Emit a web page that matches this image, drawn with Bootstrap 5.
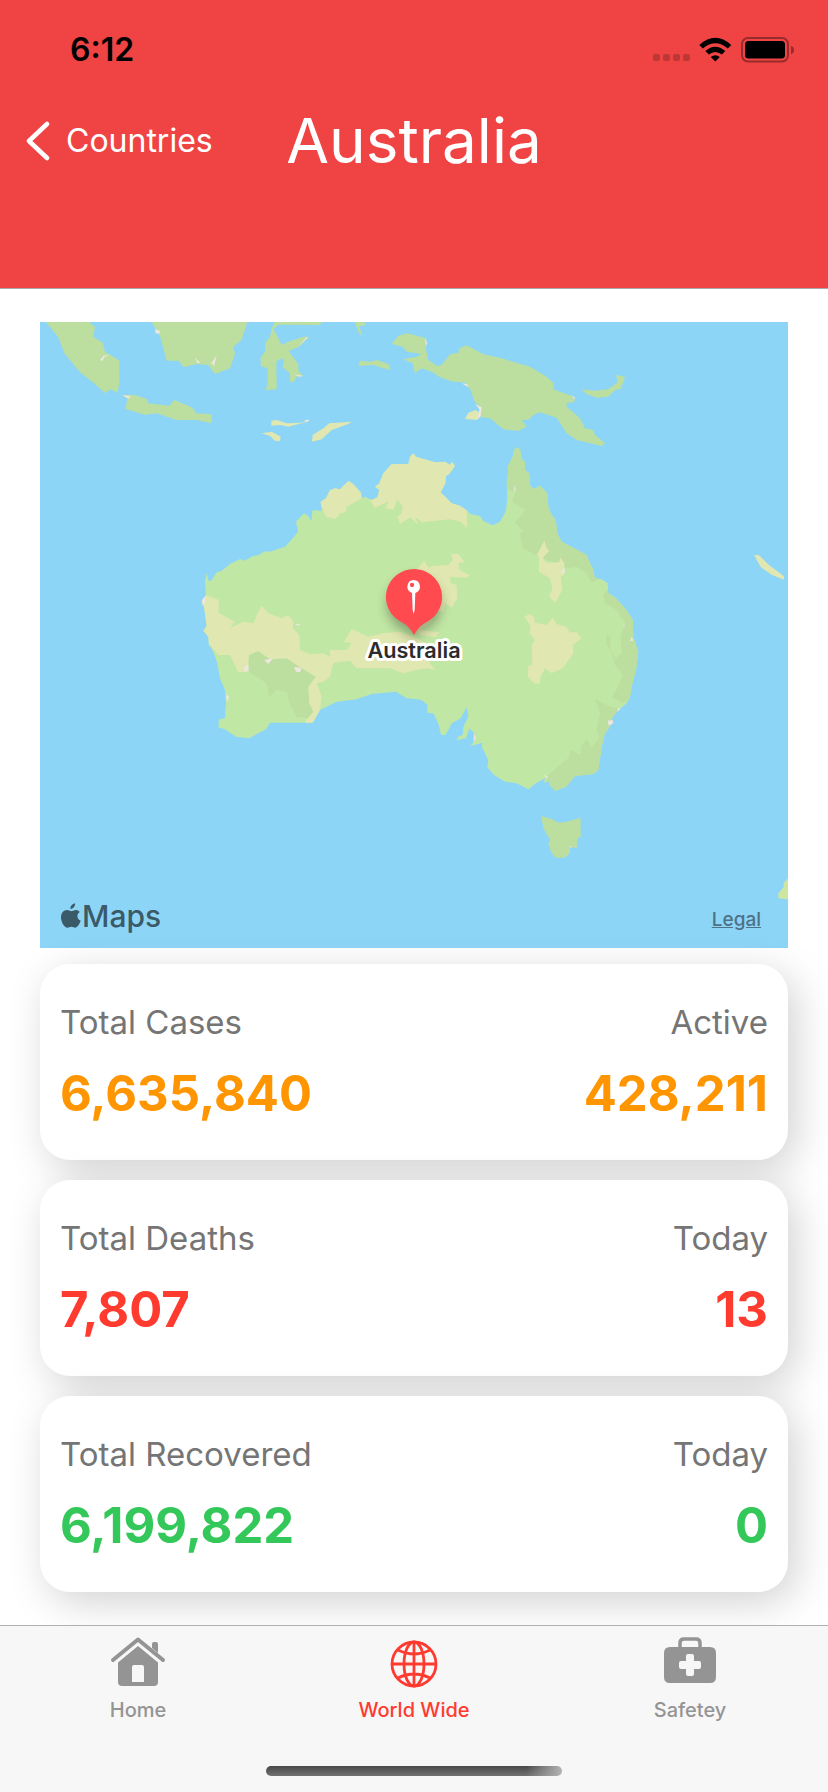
<!DOCTYPE html>
<html lang="en">
<head>
<meta charset="utf-8">
<meta name="viewport" content="width=device-width, initial-scale=1">
<title>Australia</title>
<link href="https://cdn.jsdelivr.net/npm/bootstrap@5.3.0/dist/css/bootstrap.min.css" rel="stylesheet">
<style>
  body { font-family: Inter, "Liberation Sans", sans-serif; background: #fff; }
  .app-header { background: #f04444; border-bottom: 1px solid #a8a8a8; height: 289px; }
  .status-bar { height: 96px; padding: 4px 34px 0 70px; }
  .clock { font-size: 32px; font-weight: 600; line-height: 40px; color: #000; }
  .title-row { display: grid; grid-template-columns: 1fr auto 1fr; height: 90px; padding: 0 24px; }
  .back-link { font-size: 32px; line-height: 40px; gap: 14px; }
  .page-title { font-size: 62px; line-height: 80px; font-weight: 400; }
  .content { padding: 33px 40px 32px; }
  .map-box { background: #8dd5f7; margin-bottom: 16px; }
  .map-foot { left: 21px; right: 27px; bottom: 14px; }
  .map-brand { font-size: 30px; line-height: 36px; font-weight: 500; color: #3b5a68; gap: 1px; }
  .legal-link { font-size: 19px; line-height: 28px; font-weight: 500; color: #4d7186; }
  .stat-list { gap: 20px; }
  .stat-card { background: #fff; border: 0; border-radius: 30px; box-shadow: 8px 10px 40px rgba(0,0,0,.18); padding: 36px 20px; }
  .stat-label { font-size: 33px; line-height: 44px; color: #757575; }
  .stat-value { font-size: 49px; line-height: 60px; font-weight: 700; margin-top: 20px; }
  .stat-card { padding-bottom: 36px; }
  .tone-orange { color: #ff9500; }
  .tone-red { color: #ff3b30; }
  .tone-green { color: #34c759; }
  .tab-bar { background: #f7f7f7; border-top: 1px solid #b0b0b0; height: 167px; padding-top: 10px; }
  .tab-link { font-size: 20px; line-height: 24px; font-weight: 500; color: #949494; gap: 10px; }
  .tab-link.active { color: #ff3b30; }
  .home-bar { width: 296px; height: 10px; border-radius: 5px; background: linear-gradient(90deg, transparent 88%, #b4b4b4), linear-gradient(#484848, #727272); margin-bottom: 16px; }
</style>
</head>
<body class="d-flex flex-column min-vh-100">
<header class="app-header">
  <div class="status-bar d-flex align-items-center justify-content-between">
    <span class="clock">6:12</span>
    <svg width="142" height="26" viewBox="0 0 142 26" aria-hidden="true">
      <g fill="#bd3737"><rect x="1" y="17" width="7" height="7" rx="2"/><rect x="11" y="17" width="7" height="7" rx="2"/><rect x="21" y="17" width="7" height="7" rx="2"/><rect x="31" y="17" width="7" height="7" rx="2"/></g>
      <path d="M47.300 8 Q63.300 -6.500 79.300 8 L75.800 11.500 Q63.300 1 50.800 11.500 Z M53.300 14 Q63.300 5.500 73.300 14 L69.800 17.500 Q63.300 12.500 56.800 17.500 Z M58.800 20 Q63.300 16.500 67.800 20 L63.300 24.500 Z"/>
      <rect x="90" y="1" width="46" height="23.500" rx="6" fill="none" stroke="#982b2b" stroke-width="2"/>
      <rect x="93" y="4" width="40" height="17.500" rx="3.500"/>
      <path d="M139 9 Q142 9.500 142 13 Q142 16.500 139 17 Z" fill="#982b2b"/>
    </svg>
  </div>
  <div class="title-row align-items-center">
    <a href="#" class="back-link d-inline-flex align-items-center text-white text-decoration-none">
      <svg width="28" height="40" viewBox="0 0 28 40" aria-hidden="true"><path d="M23 3 L5 20 L23 37" fill="none" stroke="#fff" stroke-width="4.500" stroke-linecap="round" stroke-linejoin="round"/></svg>
      <span>Countries</span>
    </a>
    <h1 class="page-title text-white mb-0">Australia</h1>
  </div>
</header>

<main class="content flex-grow-1">
  <section class="map-box position-relative" aria-label="Map">
    <svg class="d-block w-100" viewBox="0 6 2244 1878">
      <defs>
        <path id="mainland" d="M500 760 L506 783 514 782 530 757 545 752 570 732 600 717 612 722 640 708 658 705 672 694 690 695 735 680 752 662 774 635 768 605 792 580 804 587 814 604 818 570 845 573 842 545 858 535 870 510 885 505 900 508 925 483 940 492 963 518 965 535 975 530 995 540 1012 532 1018 510 1005 500 1018 490 1030 460 1055 432 1105 432 1110 410 1120 400 1128 410 1185 427 1215 425 1230 435 1235 425 1245 437 1228 462 1218 468 1216 490 1202 517 1235 550 1260 557 1283 573 1290 582 1320 588 1330 603 1358 616 1380 605 1398 572 1402 530 1400 485 1405 460 1403 440 1418 410 1422 390 1430 382 1440 388 1445 418 1455 425 1455 450 1467 460 1470 495 1480 508 1500 498 1522 520 1525 560 1532 580 1547 600 1552 640 1565 665 1590 678 1640 705 1650 730 1658 745 1665 775 1685 778 1703 790 1705 820 1725 832 1755 865 1778 898 1780 950 1795 995 1788 1050 1777 1090 1770 1130 1760 1150 1735 1170 1718 1190 1710 1220 1695 1240 1685 1280 1675 1350 1660 1362 1605 1368 1578 1400 1547 1412 1533 1400 1525 1382 1512 1390 1515 1375 1490 1388 1465 1408 1430 1390 1395 1385 1362 1365 1342 1342 1345 1322 1335 1300 1325 1280 1328 1268 1290 1278 1305 1262 1303 1240 1288 1225 1278 1255 1250 1260 1255 1250 1268 1245 1270 1220 1285 1190 1280 1162 1270 1180 1262 1195 1235 1210 1225 1230 1215 1245 1203 1245 1195 1210 1180 1180 1162 1178 1162 1155 1145 1140 1125 1137 1100 1135 1068 1115 995 1122 950 1138 890 1145 840 1170 818 1208 768 1208 690 1208 678 1228 650 1242 628 1255 588 1250 555 1228 535 1222 537 1198 555 1195 558 1150 555 1110 540 1075 532 1030 520 995 507 975 505 950 490 932 500 918 492 860 485 845 498 825 495 785 Z"/>
        <clipPath id="coast"><use href="#mainland"/></clipPath>
        <filter id="soft" x="-50%" y="-50%" width="200%" height="200%"><feGaussianBlur stdDeviation="18"/></filter>
      </defs>
      <use href="#mainland" fill="#c1e7a4"/>
      <g clip-path="url(#coast)">
        <g fill="#bcde9f">
          <path d="M1380 370 L1402 510 1428 515 1415 545 1440 560 1455 570 1445 585 1425 607 1452 635 1440 640 1448 685 1490 707 1520 720 1560 730 1580 745 1610 740 1640 760 1655 788 1690 770 1700 600 1500 370 Z"/>
          <path d="M1690 825 L1695 850 1730 870 1740 890 1755 905 1742 950 1745 1000 1722 1020 1710 985 1712 955 1700 942 1700 975 1725 1010 1722 1030 1748 1065 1735 1100 1716 1130 1745 1148 1800 1140 1820 900 1710 800 Z"/>
          <path d="M1665 1137 L1710 1160 1740 1165 1740 1400 1520 1430 1518 1372 1570 1325 1585 1315 1595 1290 1620 1305 1625 1275 1640 1258 1655 1282 1678 1255 1670 1230 1680 1180 Z"/>
        </g>
        <path fill="#bcde9f" d="M627 1005 L655 993 690 1018 740 1015 770 1035 825 1070 827 1090 805 1100 808 1150 820 1175 810 1195 770 1190 750 1155 740 1115 710 1110 688 1130 680 1090 627 1055 Z"/>
        <g fill="#e0e7b0">
          <path d="M470 815 L498 825 537 840 535 878 584 905 570 925 610 905 640 910 650 885 665 857 685 880 725 895 745 885 760 905 758 925 778 945 780 990 810 1003 850 1000 870 1010 870 990 920 990 935 970 912 965 935 927 985 950 1030 940 1080 935 1120 950 1160 970 1150 1000 1170 1030 1187 1050 1160 1045 1130 1050 1090 1060 1050 1045 950 1045 930 1022 880 1028 870 1070 850 1085 830 1090 845 1130 838 1180 815 1230 795 1205 820 1175 808 1150 805 1100 827 1070 770 1035 740 1015 690 1018 655 993 627 1005 622 1055 595 1057 570 1005 535 1005 510 975 480 975 Z"/>
          <path d="M850 573 L858 590 887 598 900 580 918 577 920 560 965 535 975 480 900 450 830 520 Z"/>
          <path d="M990 540 L1005 563 1048 543 1035 565 1060 570 1072 538 1088 560 1085 580 1072 590 1080 612 1110 592 1135 615 1125 590 1145 607 1230 598 1262 605 1282 625 1280 570 1260 380 1100 380 990 460 Z"/>
          <path d="M1125 755 L1152 722 1168 745 1175 738 1225 735 1238 720 1233 702 1255 702 1275 727 1255 730 1258 750 1290 765 1280 773 1230 770 1232 790 1250 795 1252 835 1235 863 1215 850 1210 875 1190 870 1170 910 1140 930 1198 937 1185 952 1140 945 1080 860 Z"/>
          <path d="M1513 662 L1520 685 1528 692 1508 715 1520 728 1558 727 1560 712 1573 730 1572 765 1562 770 1567 810 1545 850 1527 828 1537 810 1530 775 1497 755 1497 712 1490 705 Z"/>
          <path d="M1453 890 L1468 882 1482 890 1485 908 1520 915 1538 893 1550 912 1580 920 1588 937 1610 937 1625 955 1598 975 1600 1000 1568 1045 1535 1060 1515 1045 1500 1075 1500 1090 1485 1092 1463 1070 1465 1038 1477 1035 1475 975 1485 960 1468 940 1472 918 Z"/>
        </g>
      </g>
      <g fill="#bcde9f">
        <path d="M18 6 L55 52 73 100 120 157 165 192 195 220 212 208 232 218 238 190 237 130 240 122 195 95 188 68 160 50 165 22 148 6 Z"/>
        <path d="M335 6 L360 48 380 122 415 122 432 142 470 132 505 135 525 162 570 145 585 102 580 80 605 60 622 6 Z"/>
        <path d="M705 6 L695 25 690 52 677 65 675 95 662 112 662 138 683 145 683 190 677 210 710 208 709 125 725 115 732 120 728 142 750 160 750 185 760 187 770 170 790 168 775 152 775 132 745 92 775 82 808 50 790 50 745 65 725 75 710 45 700 28 715 14 760 14 840 15 845 6 Z"/>
        <path d="M245 225 L262 235 257 267 315 284 350 280 410 300 470 300 515 310 515 283 470 280 455 262 403 240 388 257 325 250 320 237 285 225 Z"/>
        <path d="M945 6 L955 35 967 50 958 18 980 14 970 6 Z M955 138 L960 122 990 125 1010 120 1045 132 1052 150 1025 143 1000 135 Z"/>
        <path d="M1055 72 L1075 48 1100 40 1120 44 1158 55 1158 90 1165 120 1180 130 1190 137 1205 135 1230 103 1255 98 1258 85 1280 76 1330 103 1385 115 1470 140 1520 170 1540 188 1540 208 1602 230 1604 245 1580 250 1580 260 1620 295 1635 325 1660 330 1665 345 1695 370 1685 378 1610 360 1580 340 1550 293 1500 277 1480 285 1465 300 1445 300 1460 320 1435 333 1390 328 1350 295 1325 292 1320 262 1300 240 1295 215 1275 187 1240 185 1200 172 1175 155 1145 145 1125 160 1118 130 1090 118 1130 110 1145 102 1100 95 1088 80 Z"/>
        <path d="M1625 208 L1665 212 1705 208 1733 187 1728 165 1755 170 1743 206 1725 210 1705 230 1670 233 1640 222 Z"/>
        <path d="M1504 1488 L1535 1497 1555 1508 1580 1505 1622 1493 1622 1550 1612 1555 1610 1585 1590 1580 1590 1598 1575 1613 1548 1613 1535 1600 1525 1572 1530 1560 1510 1525 Z"/>
        <path fill="#cfe6a2" d="M2244 1675 L2230 1690 2232 1700 2215 1720 2215 1735 2244 1738 Z"/>
      </g>
      <g fill="#e0e7b0">
        <path d="M694 302 L710 300 740 310 785 308 808 299 800 306 745 320 720 315 694 317 Z M665 340 L695 335 722 350 720 364 705 362 690 348 Z M816 365 L818 345 850 325 868 310 935 305 925 312 875 330 845 358 Z"/>
        <path d="M1275 297 L1285 278 1308 270 1322 282 1312 300 Z M2142 705 L2157 706 2187 735 2232 769 2231 779 2195 764 2162 741 Z"/>
      </g>
      <g fill="#ece6df">
        <path d="M345 28 L360 32 358 42 347 40 Z M465 112 L480 128 472 130 Z M510 135 L530 106 522 140 517 130 Z M180 120 L190 108 210 103 193 112 187 123 Z M248 226 L272 228 266 236 Z M792 300 L808 299 803 306 Z M775 80 L800 50 802 54 Z M760 162 L790 168 778 170 Z"/>
        <path d="M1265 190 L1282 192 1285 202 Z M1305 252 L1325 262 1322 290 1312 298 1318 268 Z M1155 52 L1162 70 1158 78 Z M1594 225 L1606 234 1604 238 Z M486 840 L497 827 495 848 488 857 Z M558 1122 L568 1132 560 1145 Z M612 1043 L625 1033 626 1053 614 1055 Z M762 1040 L785 1044 780 1057 768 1055 Z M672 1020 L700 1015 685 1032 Z M765 912 L782 911 774 918 Z M1425 495 L1427 515 1421 510 Z M1572 740 L1575 758 1563 760 Z M1703 1202 L1718 1200 1720 1210 1706 1217 Z M1512 1365 L1522 1368 1522 1378 Z M1302 1238 L1308 1255 1300 1268 Z M1742 1166 L1732 1175 1734 1164 Z M1588 1580 L1596 1578 1592 1584 Z M1752 910 L1754 920 1750 925 Z M1775 950 L1780 962 1770 963 Z"/>
      </g>
      <path d="M1122 770 A84 84 0 0 1 1155 930 Q1135 940 1122 965 Q1108 940 1090 930 A84 84 0 0 1 1122 770 Z" fill="#000" opacity=".3" filter="url(#soft)"/>
      <path d="M1122 747 A84 84 0 0 1 1160 906 Q1137 916 1122 946 Q1107 916 1084 906 A84 84 0 0 1 1122 747 Z" fill="#ff4a50"/>
      <path d="M1121 780 a20 20 0 0 1 5 39 L1124 870 1121 882 1118 870 1116 819 a20 20 0 0 1 5 -39 Z" fill="#fff"/>
      <circle cx="1116" cy="795" r="6.500" fill="#ff4a50"/>
      <text x="1122" y="1014" text-anchor="middle" font-family="Inter, sans-serif" font-size="65" font-weight="600" fill="#2c2c2e" stroke="#fff" stroke-width="18" stroke-linejoin="round" paint-order="stroke">Australia</text>
    </svg>
    <div class="map-foot position-absolute d-flex align-items-end justify-content-between">
      <span class="map-brand d-inline-flex align-items-center">
        <svg width="20" height="26" viewBox="0 0 22 28" aria-hidden="true"><path fill="#3b5a68" d="M15.500 0 C15.700 3.500 13 6.300 10.300 6.200 C10.200 3 12.800 .4 15.500 0 Z M20.600 9.700 C16.800 12 17.400 17.600 21.700 19.300 C20.700 22 18.400 26.700 15.800 26.800 C14.200 26.800 13.500 25.800 11.500 25.800 C9.500 25.800 8.700 26.800 7.200 26.800 C3.500 26.800 0 20.200 0 15.600 C0 10.500 3.200 7.500 6.600 7.500 C8.600 7.500 10.100 8.800 11.300 8.800 C12.500 8.800 14.300 7.300 16.700 7.400 C18.200 7.500 19.700 8.200 20.600 9.700 Z"/></svg>
        <span>Maps</span>
      </span>
      <a href="#" class="legal-link">Legal</a>
    </div>
  </section>

  <div class="stat-list d-flex flex-column">
    <section class="card stat-card">
      <div class="d-flex justify-content-between stat-label"><span>Total Cases</span><span>Active</span></div>
      <div class="d-flex justify-content-between stat-value tone-orange"><span>6,635,840</span><span>428,211</span></div>
    </section>
    <section class="card stat-card">
      <div class="d-flex justify-content-between stat-label"><span>Total Deaths</span><span>Today</span></div>
      <div class="d-flex justify-content-between stat-value tone-red"><span>7,807</span><span>13</span></div>
    </section>
    <section class="card stat-card">
      <div class="d-flex justify-content-between stat-label"><span>Total Recovered</span><span>Today</span></div>
      <div class="d-flex justify-content-between stat-value tone-green"><span>6,199,822</span><span>0</span></div>
    </section>
  </div>
</main>

<nav class="tab-bar position-relative d-flex flex-column justify-content-between align-items-center">
  <div class="row g-0 w-100">
    <a href="#" class="col tab-link d-flex flex-column align-items-center text-decoration-none">
      <svg width="56" height="52" viewBox="0 0 56 52" aria-hidden="true"><path d="M3 24 L28 3.500 L53 24" fill="none" stroke="#949494" stroke-width="4" stroke-linecap="round" stroke-linejoin="round"/><path fill="#949494" d="M42 8 q0 -2 2 -2 h2 q2 0 2 2 v9 l-6 -5 Z"/><path fill="#949494" fill-rule="evenodd" d="M28 10 L48 26.500 V46 q0 4 -4 4 H12 q-4 0 -4 -4 V26.500 Z M22 31 V46 H34 V31 q0 -2 -2 -2 H24 q-2 0 -2 2 Z"/></svg>
      <span>Home</span>
    </a>
    <a href="#" class="col tab-link active d-flex flex-column align-items-center text-decoration-none" aria-current="page">
      <svg width="48" height="52" viewBox="0 0 48 52" aria-hidden="true"><g fill="none" stroke="#ff3b30" stroke-width="2.800"><circle cx="24" cy="28" r="22"/><ellipse cx="24" cy="28" rx="10" ry="22"/><path d="M24 6 V50 M2 28 H46 M8 14 Q24 22 40 14 M8 42 Q24 34 40 42"/></g></svg>
      <span>World Wide</span>
    </a>
    <a href="#" class="col tab-link d-flex flex-column align-items-center text-decoration-none">
      <svg width="54" height="52" viewBox="0 0 54 52" aria-hidden="true"><path d="M17 13 V7 q0 -4 4 -4 H33 q4 0 4 4 V13" fill="none" stroke="#949494" stroke-width="3.500"/><path fill="#949494" fill-rule="evenodd" d="M7 11 H47 q6 0 6 6 V41 q0 6 -6 6 H7 q-6 0 -6 -6 V17 q0 -6 6 -6 Z M25 18 q-2 0 -2 2 V25 H18 q-2 0 -2 2 V31 q0 2 2 2 H23 V38 q0 2 2 2 H29 q2 0 2 -2 V33 H36 q2 0 2 -2 V27 q0 -2 -2 -2 H31 V20 q0 -2 -2 -2 Z"/></svg>
      <span>Safetey</span>
    </a>
  </div>
  <div class="home-bar"></div>
</nav>
<script src="https://cdn.jsdelivr.net/npm/bootstrap@5.3.0/dist/js/bootstrap.bundle.min.js"></script>
</body>
</html>
